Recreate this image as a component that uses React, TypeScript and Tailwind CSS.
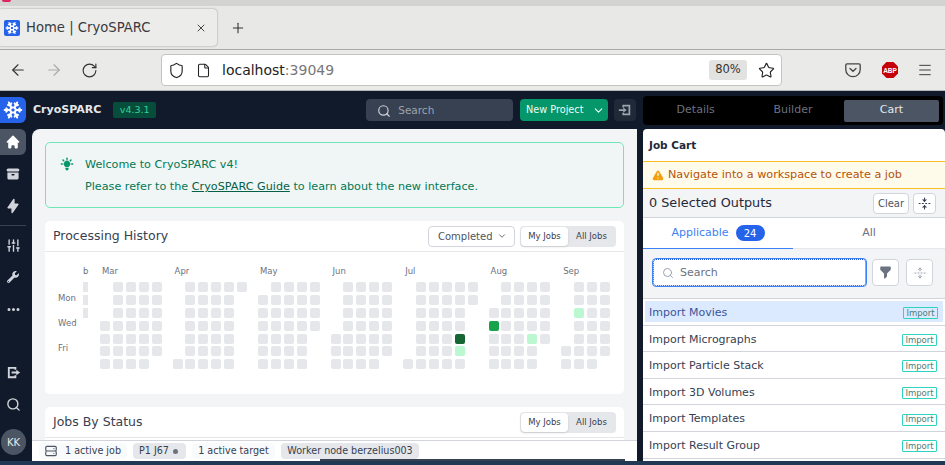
import { ArrowLeft, ArrowRight, ChevronDown, FoldVertical, Menu, Plus, RotateCw, Search, Shield, SlidersVertical, Snowflake, Star, UnfoldVertical, X, File } from "lucide-react";
import { FaWrench } from "react-icons/fa";
import { HiArchive, HiDotsHorizontal, HiExclamation, HiFilter, HiHome, HiLightBulb, HiLightningBolt, HiOutlineServer } from "react-icons/hi";

// one string per week, 7 chars per day: . empty, x grey, l light, g green, d dark
const MONTHS = [
  { label: "Mar", weeks: ["...xxxx", "xxxxxxx", "xxxxxxx", "xxxxxxx", "xxxxxx."] },
  { label: "Apr", weeks: ["......x", "xxxxxxx", "xxxxxxx", "xxxxxxx", "xxxxxxx", "x......"] },
  { label: "May", weeks: [".xxxxxx", "xxxxxxx", "xxxxxxx", "xxxxxxx", "xxxx..."] },
  { label: "Jun", weeks: ["....xxx", "xxxxxxx", "xxxxxxx", "xxxxxxx", "xxxxxx."] },
  { label: "Jul", weeks: ["......x", "xxxxxxx", "xxxxxxx", "xxxxxxx", "xxxxdlx", "xx....."] },
  { label: "Aug", weeks: ["..xgxxx", "xxxxxxx", "xxxxxxx", "xxxxlxx", "xxxxx.."] },
  { label: "Sep", weeks: [".....xx", "xxlxxxx", "xxxxxxx", "xxxxxx."] },
];

const CELL: Record<string, string> = {
  ".": "bg-transparent",
  x: "bg-[#e5e7eb]",
  l: "bg-[#bbf7d0]",
  g: "bg-[#16a34a]",
  d: "bg-[#166534]",
};

const IMPORTS = ["Import Movies", "Import Micrographs", "Import Particle Stack", "Import 3D Volumes", "Import Templates", "Import Result Group"];

function Logo({ className, size }: { className: string; size: number }) {
  return (
    <div className={`flex items-center justify-center bg-[#2563eb] ${className}`}>
      <Snowflake size={size} strokeWidth={2.4} className="text-white" />
    </div>
  );
}

function JobToggle() {
  return (
    <div className="flex h-[21px] w-[96px] rounded bg-[#e5e7eb] p-[1px] text-[8.5px] text-[#374151]">
      <div className="flex w-[47px] items-center justify-center rounded bg-white shadow-sm">My Jobs</div>
      <div className="flex flex-1 items-center justify-center">All Jobs</div>
    </div>
  );
}

function Browser() {
  return (
    <div className="shrink-0 text-[#2b2a33]">
      <div className="h-[6px] bg-[#d3d3d1]">
        <div className="ml-[2px] h-[2px] w-[9px] rounded-b-full bg-[#e0245e]" />
      </div>
      <div className="flex h-[44px] items-start border-b border-[#a9a9a7] bg-[#e8e8e6] pt-[3px]">
        <div className="-ml-[2px] flex h-[37px] w-[219px] items-center rounded-[4px] bg-[#ececea] pl-[6px] pr-[10px] shadow-[0_0_2px_rgba(0,0,0,0.4)]">
          <Logo className="h-[16px] w-[16px] rounded-[2px]" size={14} />
          <span className="ml-[6px] flex-1 text-[13.2px] text-[#3a3a3f]">Home | CryoSPARC</span>
          <X size={12} className="text-[#444]" />
        </div>
        <Plus size={16} strokeWidth={1.6} className="ml-[13px] mt-[11px] text-[#333]" />
      </div>
      <div className="flex h-[41px] items-center border-b border-[#b5b5b3] bg-[#eaeae8]">
        <ArrowLeft size={18} strokeWidth={1.5} className="ml-[9px] text-[#333]" />
        <ArrowRight size={18} strokeWidth={1.5} className="ml-[18px] text-[#aaa]" />
        <RotateCw size={17} strokeWidth={1.6} className="ml-[18px] text-[#333]" />
        <div className="ml-[63px] flex h-[32px] w-[621px] items-center rounded-[4px] border border-[#c4c4c2] bg-white">
          <Shield size={17} strokeWidth={1.6} className="ml-[6px] text-[#222]" />
          <File size={15} strokeWidth={1.7} className="ml-[11px] text-[#222]" />
          <span className="ml-[11px] flex-1 text-[14px] text-[#222]">
            localhost<span className="text-[#777]">:39049</span>
          </span>
          <span className="flex h-[20px] w-[38px] items-center justify-center rounded-[3px] bg-[#e2e2e0] text-[11.5px] text-[#333]">80%</span>
          <Star size={17} strokeWidth={1.6} className="ml-[11px] mr-[6px] text-[#222]" />
        </div>
        <svg viewBox="0 0 16 16" className="ml-[63px] h-[16px] w-[16px] text-[#444]" fill="none" stroke="currentColor" strokeWidth="1.3">
          <path d="M2 1.8h12a1.2 1.2 0 0 1 1.2 1.2v4.5a7.2 7.2 0 0 1-14.4 0V3A1.2 1.2 0 0 1 2 1.8Z" />
          <path d="M5 6.5 8 9.3 11 6.5" strokeLinecap="round" />
        </svg>
        <svg viewBox="0 0 18 18" className="ml-[20px] h-[18px] w-[18px]">
          <path d="M5.5 1h7L17 5.5v7L12.5 17h-7L1 12.5v-7Z" fill="#c40008" />
          <text x="9" y="11.5" textAnchor="middle" fontSize="6.5" fontWeight="700" fill="#fff" fontFamily="Liberation Sans, sans-serif">ABP</text>
        </svg>
        <Menu size={16} strokeWidth={1.4} className="ml-[18px] text-[#333]" />
      </div>
    </div>
  );
}

function Sidebar() {
  const icon = "flex h-[26px] w-[26px] items-center justify-center text-[#d1d5db]";
  return (
    <div className="flex w-[32px] shrink-0 flex-col pt-[6px]">
      <Logo className="mb-[6px] h-[26px] w-[26px] rounded-r-md" size={20} />
      <div className={`${icon} rounded-r-md bg-[#4b5563] !text-white`}><HiHome size={16} /></div>
      <div className={`${icon} mt-[6px]`}><HiArchive size={16} /></div>
      <div className={`${icon} mt-[6px]`}><HiLightningBolt size={16} /></div>
      <div className="mt-[6px] h-px w-[26px] bg-[#374151]" />
      <div className={`${icon} mt-[6px]`}><SlidersVertical size={15} strokeWidth={2.2} /></div>
      <div className={`${icon} mt-[6px]`}><FaWrench size={12} /></div>
      <div className={`${icon} mt-[6px]`}><HiDotsHorizontal size={15} /></div>
      <div className={`${icon} mt-[37px]`}>
        <svg viewBox="0 0 16 16" className="h-[15px] w-[15px]" fill="currentColor">
          <path d="M2 2h9v3H9V4H4v8h5v-1h2v3H2Z" />
          <path d="M6 7h5V5l4 3-4 3V9H6Z" />
        </svg>
      </div>
      <div className={`${icon} mt-[6px]`}><Search size={15} strokeWidth={2.2} /></div>
      <div className="ml-[1px] mt-[12px] flex h-[26px] w-[25px] items-center justify-center rounded-full bg-[#4b5563] text-[10px] text-[#e5e7eb]">KK</div>
    </div>
  );
}

function Heatmap() {
  return (
    <div className="flex pl-[13px] pt-[14px] text-[8.5px] text-[#6b7280]">
      <div className="flex w-[25px] flex-col pt-[27px]">
        <span className="h-[25px] leading-[11px]">Mon</span>
        <span className="h-[25px] leading-[11px]">Wed</span>
        <span className="leading-[11px]">Fri</span>
      </div>
      <div className="w-[17px] overflow-hidden">
        <div className="h-[16px] leading-[11px]">b</div>
        <div className="flex flex-col gap-[3px]">
          <div className="h-[10px] w-[5px] bg-[#e5e7eb]" />
          <div className="h-[10px] w-[5px] bg-[#e5e7eb]" />
          <div className="h-[10px] w-[5px] bg-[#e5e7eb]" />
        </div>
      </div>
      <div className="flex gap-[11px]">
        {MONTHS.map((m) => (
          <div key={m.label}>
            <div className="h-[16px] pl-[2px] leading-[11px]">{m.label}</div>
            <div className="flex gap-[2.9px]">
              {m.weeks.map((w, i) => (
                <div key={i} className="flex flex-col gap-[2.9px]">
                  {w.split("").map((c, j) => (
                    <div key={j} className={`h-[10px] w-[10px] rounded-[2px] ${CELL[c]}`} />
                  ))}
                </div>
              ))}
            </div>
          </div>
        ))}
      </div>
    </div>
  );
}

function Main() {
  return (
    <div className="flex min-w-0 flex-1 flex-col overflow-hidden rounded-tl-lg bg-[#f3f4f6]">
      <div className="flex min-h-0 flex-1 flex-col overflow-hidden px-[13px] pt-[13px]">
        <div className="flex h-[66px] shrink-0 rounded-[5px] border border-[#6ee7b7] bg-[#f0f6f5] pl-[13px] pt-[13px] text-[11.2px] text-[#047857]">
          <HiLightBulb size={16} className="text-[#059669]" />
          <div className="ml-[10px] mt-[1px]">
            <div className="leading-[16px]">Welcome to CryoSPARC v4!</div>
            <div className="mt-[6px] leading-[16px]">
              Please refer to the <span className="text-[#065f46] underline">CryoSPARC Guide</span> to learn about the new interface.
            </div>
          </div>
        </div>
        <div className="mt-[13px] h-[173px] shrink-0 rounded-[5px] bg-white">
          <div className="flex h-[31px] items-center border-b border-[#e5e7eb] pl-[8px] pr-[8px]">
            <span className="flex-1 text-[12.5px] text-[#374151]">Processing History</span>
            <div className="flex h-[21px] w-[87px] items-center justify-between rounded border border-[#d1d5db] pl-[9px] pr-[7px] text-[10px] text-[#4b5563]">
              Completed <ChevronDown size={10} />
            </div>
            <div className="ml-[5px]"><JobToggle /></div>
          </div>
          <Heatmap />
        </div>
        <div className="mt-[13px] h-[40px] shrink-0 rounded-t-[5px] bg-white">
          <div className="flex h-[31px] items-center border-b border-[#e5e7eb] pl-[8px] pr-[8px]">
            <span className="flex-1 text-[12.5px] text-[#374151]">Jobs By Status</span>
            <JobToggle />
          </div>
        </div>
      </div>
      <div className="flex h-[19px] shrink-0 items-start gap-[6px] border-t border-[#d1d5db] bg-white pl-[7px] pt-[2px] text-[9.6px] text-[#374151]">
        <div className="flex h-[16px] w-[88px] items-center rounded bg-[#f9fafb] pl-[5px]">
          <HiOutlineServer size={14} className="text-[#4b5563]" />
          <span className="ml-[7px] pt-[1px]">1 active job</span>
        </div>
        <div className="flex h-[16px] w-[53px] items-center rounded bg-[#e5e7eb] pl-[6px] pt-[1px]">
          P1 J67 <span className="ml-[4px] h-[5px] w-[5px] rounded-full bg-[#6b7280]" />
        </div>
        <div className="flex h-[16px] w-[83px] items-center justify-center rounded bg-[#f9fafb] pt-[1px]">1 active target</div>
        <div className="flex h-[16px] w-[138px] items-center justify-center rounded bg-[#e5e7eb] pt-[1px]">Worker node berzelius003</div>
      </div>
      <div className="h-[2px] shrink-0 bg-white pl-[288px] pr-[12px]">
        <div className="h-full bg-[#374151]" />
      </div>
    </div>
  );
}

function Cart() {
  return (
    <div className="flex w-[302px] shrink-0 flex-col">
      <div className="mb-[4px] mt-[5px] flex h-[29px] w-[300px] shrink-0 items-center rounded-[4px] bg-black px-[4px] text-[11px] text-[#6b7280]">
        <div className="flex-1 text-center">Details</div>
        <div className="flex-1 text-center">Builder</div>
        <div className="flex flex-1 justify-end">
          <div className="flex h-[22px] w-[95px] items-center justify-center rounded-[2px] bg-[#4b5563] text-[#e5e7eb]">Cart</div>
        </div>
      </div>
      <div className="flex min-h-0 flex-1 flex-col overflow-hidden rounded-t-[4px] bg-white">
        <div className="flex h-[32px] shrink-0 items-center pl-[6px] pt-[1px] text-[10.5px] font-bold text-[#1f2937]">Job Cart</div>
        <div className="flex h-[28px] shrink-0 items-center border-y border-[#fbbf24] bg-[#fffbeb] pl-[8px] pt-[1px] text-[11.2px] text-[#b45309]">
          <HiExclamation size={14} className="text-[#f59e0b]" />
          <span className="ml-[3px]">Navigate into a workspace to create a job</span>
        </div>
        <div className="flex h-[29px] shrink-0 items-center border-b border-[#d1d5db] bg-[#f3f4f6] pl-[6px] pr-[9px] text-[12.8px] text-[#1f2937]">
          <span className="flex-1">0 Selected Outputs</span>
          <div className="flex h-[21px] w-[36px] items-center justify-center rounded border border-[#d1d5db] bg-white text-[10px] text-[#4b5563]">Clear</div>
          <div className="ml-[4px] flex h-[21px] w-[23px] items-center justify-center rounded border border-[#d1d5db] bg-white text-[#374151]"><FoldVertical size={13} /></div>
        </div>
        <div className="flex h-[31px] shrink-0 text-[11px]">
          <div className="flex w-[150px] items-center justify-center border-b border-[#3b82f6] text-[#3b82f6]">
            Applicable
            <span className="ml-[7px] flex h-[16px] w-[29px] items-center justify-center rounded-full bg-[#2563eb] text-[10px] text-white">24</span>
          </div>
          <div className="flex flex-1 items-center justify-center border-b border-[#e5e7eb] text-[#6b7280]">All</div>
        </div>
        <div className="flex h-[50px] shrink-0 items-start border-b border-[#d1d5db] bg-[#f3f4f6] pl-[10px] pt-[10px]">
          <div className="flex h-[27px] w-[213px] items-center rounded-[3px] border border-dotted border-[#1d4ed8] bg-white pl-[8px] pt-[1px] text-[11px] text-[#6b7280] outline outline-1 outline-[#3b82f6]">
            <Search size={12} className="text-[#9ca3af]" />
            <span className="ml-[6px]">Search</span>
          </div>
          <div className="ml-[6px] flex h-[27px] w-[27px] items-center justify-center rounded border border-[#d1d5db] bg-white text-[#6b7280]"><HiFilter size={15} /></div>
          <div className="ml-[7px] flex h-[27px] w-[27px] items-center justify-center rounded border border-[#d1d5db] bg-white text-[#9ca3af]"><UnfoldVertical size={12} /></div>
        </div>
        <div>
          {IMPORTS.map((name, i) => (
            <div key={name} className="flex h-[26.6px] items-center border-b border-[#d1d5db]">
              <div className={`flex h-[21px] w-full items-center pt-[3px] text-[11px] ${i === 0 ? "mx-[2px] bg-[#dbeafe] pl-[4px] pr-[5px] text-[#3b549c]" : "pl-[6px] pr-[8px] text-[#374151]"}`}>
                <span className="flex-1">{name}</span>
                <span className="flex h-[12px] w-[35px] items-center justify-center rounded-[1px] border border-[#2dd4bf] text-[8.5px] text-[#4b7f78]">Import</span>
              </div>
            </div>
          ))}
        </div>
      </div>
    </div>
  );
}

export default function App() {
  return (
    <div className="flex h-[465px] w-[945px] flex-col overflow-hidden bg-[#111a2b] font-['DejaVu_Sans',sans-serif]">
      <Browser />
      <div className="flex min-h-0 flex-1 border-b-4 border-[#1f3a52]">
        <Sidebar />
        <div className="flex w-[605px] shrink-0 flex-col">
          <div className="flex h-[38px] shrink-0 items-center pr-[1px]">
            <span className="ml-[1px] text-[11px] font-bold text-[#e5e7eb]">CryoSPARC</span>
            <span className="ml-[12px] flex h-[16px] w-[43px] items-center justify-center rounded-[2px] bg-[#064e3b] text-[9.5px] text-[#34d399]">v4.3.1</span>
            <div className="ml-[210px] flex h-[22px] w-[147px] items-center rounded bg-[#374151] pl-[11px] pt-[1px] text-[10.5px] text-[#9ca3af]">
              <Search size={14} className="text-[#d1d5db]" />
              <span className="ml-[7px]">Search</span>
            </div>
            <div className="ml-[7px] flex h-[22px] w-[88px] items-center justify-between rounded bg-[#059669] pl-[6px] pr-[3px] text-[9.7px] text-[#ecfdf5]">
              New Project <ChevronDown size={13} />
            </div>
            <div className="ml-[6px] flex h-[22px] w-[22px] items-center justify-center rounded bg-[#1f2937] text-[#9ca3af]">
              <svg viewBox="0 0 16 16" className="h-[14px] w-[14px]" fill="currentColor">
                <path d="M5 2h9v12H5v-3h2v1h5V4H7v1H5Z" />
                <path d="M1 7h5V5l4 3-4 3V9H1Z" />
              </svg>
            </div>
          </div>
          <Main />
        </div>
        <div className="w-[6px] shrink-0" />
        <Cart />
      </div>
    </div>
  );
}
